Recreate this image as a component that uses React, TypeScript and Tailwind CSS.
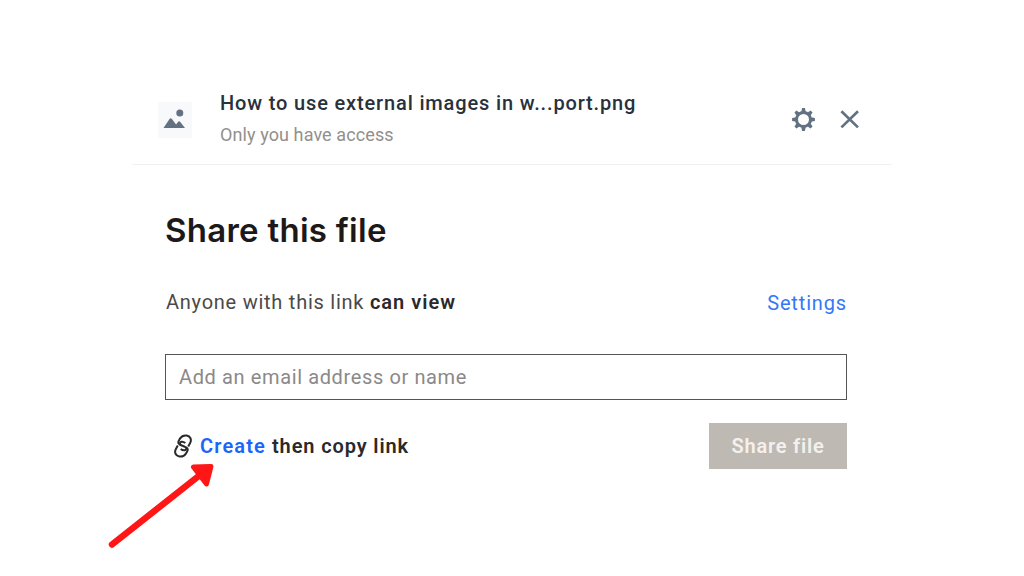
import React from "react";

function ImageThumb() {
  return (
    <svg className="mt-0.5 h-9 w-[34px] shrink-0 bg-[#f7f9fa]" viewBox="0 0 34 36" fill="#637282">
      <circle cx="21.8" cy="10.9" r="3.5" />
      <path d="M5.5 26L11.5 17q1.200-1.500 2.400 0l4.200 5.500 2-2.700q1-1.300 2 0L27 26z" />
    </svg>
  );
}

function Gear() {
  const angles = [0, 45, 90, 135, 180, 225, 270, 315];
  return (
    <svg className="h-6 w-6" viewBox="-11.5 -12.5 24 24" fill="#637282">
      <circle r="7" fill="none" stroke="#637282" strokeWidth="3" />
      {angles.map((a) => (
        <path key={a} transform={`rotate(${a})`} d="M-2.2-7.5L-1.4-11.4H1.4L2.2-7.5z" />
      ))}
    </svg>
  );
}

function Close() {
  return (
    <svg className="h-5 w-5" viewBox="0 0 20 20" stroke="#637282" strokeWidth="2.7">
      <path d="M1.4 2.2L18 18.4M18 2.2L1.4 18.4" />
    </svg>
  );
}

function LinkIcon() {
  return (
    <svg
      className="h-6 w-[18px] shrink-0"
      viewBox="0 0 18 24"
      fill="none"
      stroke="#2b2929"
      strokeWidth="2"
    >
      <path d="M14.2 12.4L16 9.200C18 5.600 16.400 2.100 12.600 1.500C9.800 1.100 7.600 2.100 6.100 4.400L4.900 6.400C3.400 9 5 10.600 7.200 11.300L10.800 12.700C13 13.500 12.600 15.800 10.600 16.200C9.100 16.500 7.900 15.900 6.700 14.900" />
      <path d="M3.800 11.600L2 14.800C0 18.400 1.600 21.900 5.400 22.500C8.200 22.900 10.400 21.900 11.900 19.600L13.100 17.600C14.200 15.700 13.700 14.200 12.300 13.300M7.200 11.300C5.400 10.400 5.600 8.200 7.400 7.800C8.900 7.500 10.100 8.100 11.300 9.100" />
    </svg>
  );
}

export default function App() {
  return (
    <div className="relative h-[576px] w-[1024px] overflow-hidden bg-white pt-[74px] font-['Roboto','Liberation_Sans',sans-serif]">
      <main className="ml-[132px] w-[760px]">
        <header className="flex h-[91px] items-center border-b border-[#f0f0f0] pr-8 pl-[25.5px]">
          <ImageThumb />
          <div className="ml-[28.5px] flex-1 whitespace-nowrap">
            <div className="text-[20px] leading-8 font-medium tracking-[0.85px] text-[#29313b]">
              How to use external images in w...port.png
            </div>
            <div className="text-[18px] leading-8 tracking-[0.1px] text-[#938f8b]">
              Only you have access
            </div>
          </div>
          <button aria-label="File settings">
            <Gear />
          </button>
          <button aria-label="Close" className="ml-6">
            <Close />
          </button>
        </header>
        <section className="pr-[45px] pl-[33px] whitespace-nowrap">
          <h1 className="mt-[45px] font-['Inter',sans-serif] text-[33px] leading-10 font-semibold tracking-[0.27px] text-[#1e1919]">
            Share this file
          </h1>
          <div className="mt-9 flex h-8 items-center justify-between text-[20px]">
            <p className="pl-px tracking-[0.75px] text-[#4c4948]">
              Anyone with this link{" "}
              <strong className="font-semibold tracking-[1px] text-[#2b2929]">can view</strong>
            </p>
            <a className="relative top-px tracking-[0.85px] text-[#3577f5]">Settings</a>
          </div>
          <input
            className="mt-9 block h-[46px] w-full rounded-none border border-[#555] px-[13px] text-[20px] tracking-[0.62px] outline-none placeholder:text-[#8b8988]"
            placeholder="Add an email address or name"
          />
          <div className="mt-[23px] flex h-[46px] items-center justify-between text-[20px] font-semibold">
            <div className="flex items-center pl-[9px] text-[#2b2929]">
              <LinkIcon />
              <a className="ml-2 tracking-[1.15px] text-[#1b66fa]">Create</a>
              <span className="ml-1.5 tracking-[0.88px]">then copy link</span>
            </div>
            <button className="h-full w-[138px] bg-[#bfb9b4] tracking-[0.8px] text-[#f4f1ed]">
              Share file
            </button>
          </div>
        </section>
      </main>
      <svg
        className="pointer-events-none absolute top-[455px] left-[100px] h-[100px] w-[125px]"
        viewBox="0 0 125 100"
        fill="#ff1616"
        stroke="#ff1616"
        strokeLinecap="round"
        strokeLinejoin="round"
      >
        <path d="M12 89.5L100 20" strokeWidth="6.5" />
        <path d="M93.5 12L111 11.5L106.5 29z" strokeWidth="5" />
      </svg>
    </div>
  );
}
